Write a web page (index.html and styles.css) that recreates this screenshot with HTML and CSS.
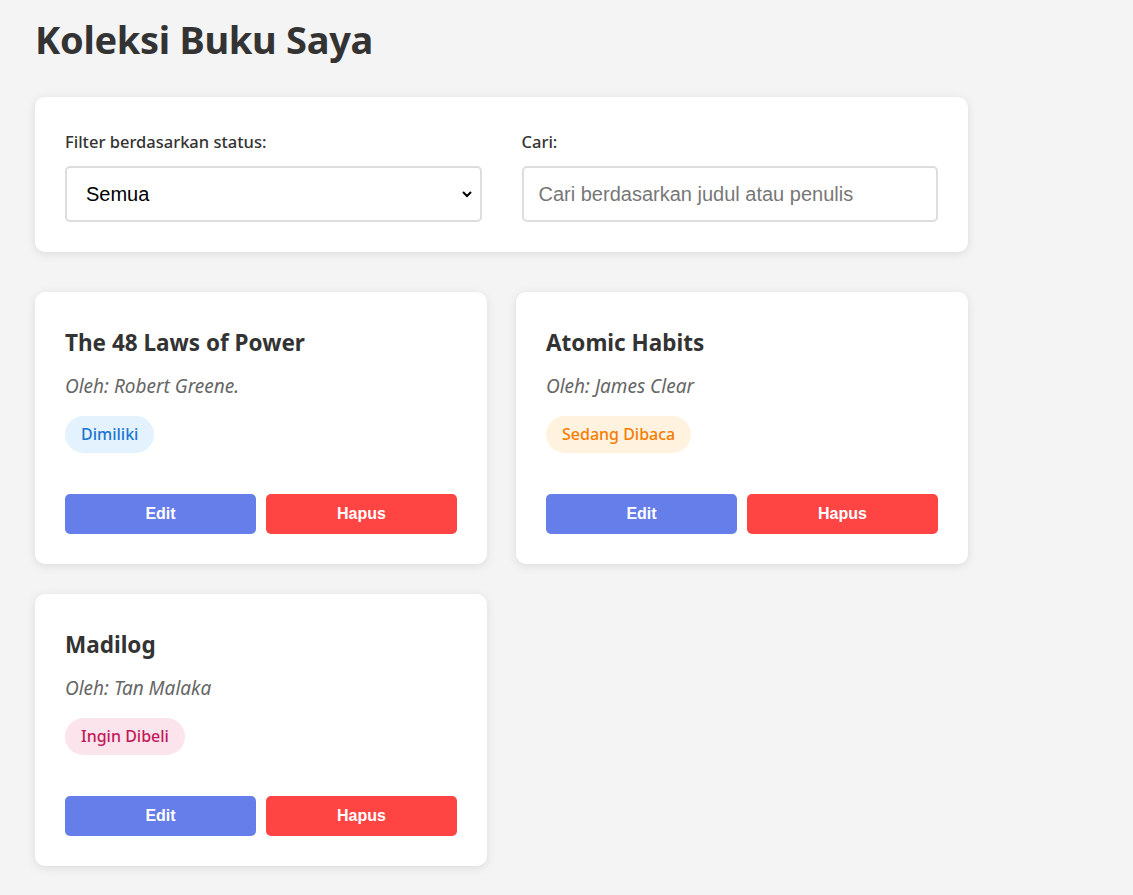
FILE: index.html
```html
<!DOCTYPE html>
<html lang="id">
<head>
<meta charset="utf-8">
<title>Koleksi Buku Saya</title>
<link rel="stylesheet" href="styles.css">
</head>
<body>
<div class="container">
  <h1 class="page-title">Koleksi Buku Saya</h1>
  <div class="filter-card">
    <div class="field">
      <label class="field-label" for="status">Filter berdasarkan status:</label>
      <div class="select-wrap">
        <select id="status" class="control select">
          <option>Semua</option>
          <option>Dimiliki</option>
          <option>Sedang Dibaca</option>
          <option>Ingin Dibeli</option>
        </select>
        <svg class="chev" width="12" height="8" viewBox="0 0 12 8"><path d="M2 2l4 4 4-4" fill="none" stroke="#000" stroke-width="2"/></svg>
      </div>
    </div>
    <div class="field">
      <label class="field-label" for="cari">Cari:</label>
      <input id="cari" class="control" type="text" placeholder="Cari berdasarkan judul atau penulis">
    </div>
  </div>
  <div class="book-grid">
    <div class="book-card">
      <h3 class="book-title">The 48 Laws of Power</h3>
      <p class="book-author">Oleh: Robert Greene.</p>
      <span class="badge badge-owned">Dimiliki</span>
      <div class="actions">
        <button class="btn btn-edit">Edit</button>
        <button class="btn btn-delete">Hapus</button>
      </div>
    </div>
    <div class="book-card">
      <h3 class="book-title">Atomic Habits</h3>
      <p class="book-author">Oleh: James Clear</p>
      <span class="badge badge-reading">Sedang Dibaca</span>
      <div class="actions">
        <button class="btn btn-edit">Edit</button>
        <button class="btn btn-delete">Hapus</button>
      </div>
    </div>
    <div class="book-card">
      <h3 class="book-title">Madilog</h3>
      <p class="book-author">Oleh: Tan Malaka</p>
      <span class="badge badge-wish">Ingin Dibeli</span>
      <div class="actions">
        <button class="btn btn-edit">Edit</button>
        <button class="btn btn-delete">Hapus</button>
      </div>
    </div>
  </div>
</div>
</body>
</html>
```
FILE: styles.css
```css
* { box-sizing: border-box; }
html, body { margin: 0; }
body {
  background: #f4f4f4;
  font-family: "Noto Sans", "Open Sans", sans-serif;
  color: #333;
  padding: 16px 35px 30px;
}
.container { max-width: 933px; }
.page-title {
  font-size: 38px;
  font-weight: 700;
  margin: 0 0 35px;
  line-height: 46px;
  letter-spacing: -0.3px;
}
.filter-card {
  background: #fff;
  border-radius: 10px;
  box-shadow: 0 2px 10px rgba(0,0,0,0.1);
  padding: 34px 30px 30px;
  display: grid;
  grid-template-columns: 1fr 1fr;
  gap: 40px;
  margin-bottom: 40px;
}
.field { display: flex; flex-direction: column; }
.field-label {
  font-size: 16.5px;
  font-weight: 500;
  margin-bottom: 13px;
  line-height: 22px;
}
.select-wrap { position: relative; }
.control {
  width: 100%;
  height: 56px;
  border: 2px solid #ddd;
  border-radius: 5px;
  padding: 0 15px;
  font-family: "Liberation Sans", Arial, sans-serif;
  font-size: 20px;
  background: #fff;
  color: #000;
}
.control::placeholder { color: #777; }
.select {
  appearance: none;
  -webkit-appearance: none;
  padding-left: 19px;
}
.chev {
  position: absolute;
  right: 9px;
  top: 24px;
  pointer-events: none;
}
.book-grid {
  display: grid;
  grid-template-columns: 1fr 1fr;
  column-gap: 29px;
  row-gap: 30px;
}
.book-card {
  background: #fff;
  border-radius: 10px;
  box-shadow: 0 2px 10px rgba(0,0,0,0.1);
  padding: 30px 30px 30px;
  display: flex;
  flex-direction: column;
  align-items: flex-start;
}
.book-title {
  font-size: 22.5px;
  font-weight: 700;
  margin: 6px 0 0;
  line-height: 30px;
}
.book-author {
  font-style: italic;
  color: #666;
  font-size: 19px;
  margin: 16px 0 0;
  line-height: 24px;
}
.badge {
  margin-top: 18px;
  height: 37px;
  line-height: 37px;
  padding: 0 16px;
  border-radius: 20px;
  font-size: 16px;
  font-weight: 500;
}
.badge-owned { background: #e3f2fd; color: #1976d2; }
.badge-reading { background: #fff3e0; color: #f57c00; }
.badge-wish { background: #fce4ec; color: #c2185b; }
.actions {
  margin-top: 41px;
  display: grid;
  grid-template-columns: 1fr 1fr;
  gap: 10px;
  width: 100%;
}
.btn {
  height: 40px;
  border: none;
  border-radius: 5px;
  color: #fff;
  font-family: "Liberation Sans", Arial, sans-serif;
  font-weight: 700;
  font-size: 16px;
}
.btn-edit { background: #667eea; }
.btn-delete { background: #ff4444; }
```
